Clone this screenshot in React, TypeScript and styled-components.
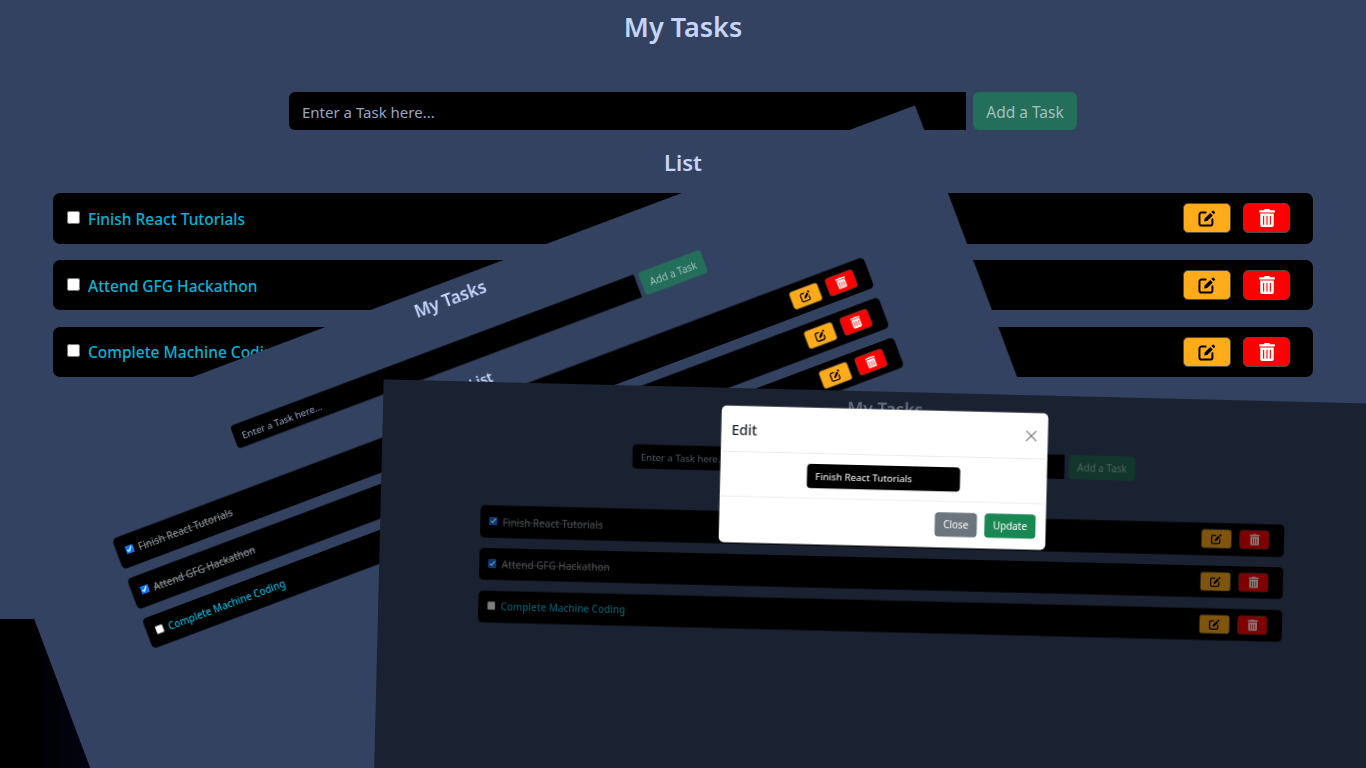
import React from "react";
import styled, { createGlobalStyle, css } from "styled-components";
import { FaTrashAlt } from "react-icons/fa";

const Global = createGlobalStyle`
  html, body { margin: 0; padding: 0; }
  body {
    width: 1366px;
    height: 768px;
    overflow: hidden;
    background: linear-gradient(90deg, #000 0%, #000 30px, #04051a 110px);
    font-family: "Noto Sans", "Open Sans", sans-serif;
  }
  #root { width: 1366px; height: 768px; position: relative; overflow: hidden; }
`;

type Placement = "base" | "tilted" | "dimmed";

const placements = {
  base: css`
    position: relative;
    width: 1366px;
    height: 619px;
  `,
  tilted: css`
    position: absolute;
    left: -67.7px;
    top: 434.75px;
    width: 1577.5px;
    height: 820px;
    padding: 1.25px 0 0 105px;
    transform-origin: 105px 1.25px;
    transform: rotate(-20.6deg) scale(0.637);
    filter: blur(0.25px);
  `,
  dimmed: css`
    position: absolute;
    left: 345.5px;
    top: 381.2px;
    width: 1582px;
    height: 820px;
    padding-left: 104px;
    transform-origin: 104px 0;
    transform: rotate(1.4deg) scale(0.638);
    filter: blur(0.25px);
  `,
};

const Sheet = styled.section<{ $placement: Placement }>`
  ${(p) => placements[p.$placement]}
  box-sizing: border-box;
  background: #344262;
  overflow: hidden;
`;

const Inner = styled.div`
  width: 1366px;
  display: flex;
  flex-direction: column;
  align-items: center;
`;

const Title = styled.h1`
  margin: 0;
  height: 92px;
  padding-top: 8px;
  box-sizing: border-box;
  font-size: 27px;
  line-height: 38px;
  font-weight: 600;
  color: #c5d5fb;
`;

const AddRow = styled.div`
  display: flex;
  gap: 7px;
  height: 38px;
`;

const TaskInput = styled.input`
  width: 677px;
  height: 38px;
  box-sizing: border-box;
  padding: 2px 13px 0;
  border: none;
  border-radius: 6px 0 0 6px;
  outline: none;
  background: #000;
  color: #fff;
  font: 15px "Noto Sans", sans-serif;
  &::placeholder { color: #97a6c6; opacity: 1; }
`;

const AddButton = styled.button`
  width: 104px;
  height: 38px;
  padding: 2px 0 0;
  border: none;
  border-radius: 6px;
  background: #236f59;
  color: #a3bfc0;
  font: 15.5px "Noto Sans", sans-serif;
`;

const ListTitle = styled.h2`
  margin: 0;
  height: 63px;
  padding-top: 14px;
  box-sizing: border-box;
  font-size: 22px;
  line-height: 36px;
  font-weight: 600;
  color: #c5d5fb;
`;

const Rows = styled.ul`
  list-style: none;
  margin: 0;
  padding: 0;
  width: 1260px;
  display: flex;
  flex-direction: column;
  gap: 16.3px;
`;

const Row = styled.li`
  height: 50.5px;
  padding: 0 23px 0 14px;
  box-sizing: border-box;
  display: flex;
  align-items: center;
  border-radius: 7px;
  background: #000;
`;

const Check = styled.input`
  width: 13px;
  height: 13px;
  margin: -2px 8px 0 0;
  flex: none;
`;

const TaskName = styled.span<{ $done: boolean }>`
  flex: 1;
  padding-top: 1px;
  font-size: 15.5px;
  font-weight: 500;
  color: ${(p) => (p.$done ? "#85898f" : "#00b4d8")};
  text-decoration: ${(p) => (p.$done ? "line-through" : "none")};
`;

const Actions = styled.div`
  display: flex;
  gap: 12px;
`;

const IconButton = styled.button<{ $tone: "edit" | "remove" }>`
  width: ${(p) => (p.$tone === "edit" ? 48 : 47)}px;
  height: 30px;
  padding: 0;
  display: flex;
  align-items: center;
  justify-content: center;
  box-sizing: border-box;
  border: 1px solid #4c4c4c;
  border-radius: 5px;
  font-size: 18px;
  background: ${(p) => (p.$tone === "edit" ? "#ffab1a" : "#ff0000")};
  color: ${(p) => (p.$tone === "edit" ? "#000" : "#fff")};
`;

const EditGlyph = styled.svg`
  width: 18px;
  height: 18px;
`;

const Backdrop = styled.div`
  position: absolute;
  inset: 0;
  background: rgba(0, 0, 0, 0.5);
`;

const Modal = styled.div`
  position: absolute;
  left: 531px;
  top: 28px;
  width: 512px;
  height: 214px;
  display: flex;
  flex-direction: column;
  border-radius: 8px;
  background: #fff;
  color: #212529;
`;

const ModalHeader = styled.header`
  height: 72px;
  flex: none;
  padding: 0 16px;
  box-sizing: border-box;
  display: flex;
  align-items: center;
  justify-content: space-between;
  border-bottom: 1px solid #dee2e6;
  font-size: 22px;
  font-weight: 500;
`;

const CloseGlyph = styled.svg`
  width: 20px;
  height: 20px;
  stroke: #6d6e70;
  stroke-width: 1.6;
  fill: none;
`;

const ModalBody = styled.div`
  height: 70px;
  flex: none;
  box-sizing: border-box;
  display: flex;
  align-items: center;
  justify-content: center;
  border-bottom: 1px solid #dee2e6;
`;

const EditInput = styled.input`
  width: 240px;
  height: 38px;
  box-sizing: border-box;
  padding: 0 13px;
  border: none;
  border-radius: 6px;
  background: #000;
  color: #fff;
  font: 15.3px "Noto Sans", sans-serif;
`;

const ModalFooter = styled.footer`
  flex: 1;
  padding: 0 16px;
  display: flex;
  align-items: center;
  justify-content: flex-end;
  gap: 12px;
`;

const FooterButton = styled.button<{ $primary?: boolean }>`
  width: ${(p) => (p.$primary ? 80 : 66)}px;
  height: 38px;
  padding: 0;
  border: none;
  border-radius: 6px;
  background: ${(p) => (p.$primary ? "#198754" : "#6c757d")};
  color: #fff;
  font: 15.5px "Noto Sans", sans-serif;
`;

const tasks = ["Finish React Tutorials", "Attend GFG Hackathon", "Complete Machine Coding"];

function EditIcon() {
  return (
    <EditGlyph viewBox="0 0 20 20" aria-hidden="true">
      <path
        d="M8.5 4 H4 a2.4 2.4 0 0 0 -2.4 2.4 V16 a2.4 2.4 0 0 0 2.4 2.4 H13.6 a2.4 2.4 0 0 0 2.4 -2.4 V11.5"
        fill="none"
        stroke="currentColor"
        strokeWidth="2.2"
        strokeLinecap="round"
      />
      <path
        d="M6.8 14 L7.4 10.6 L13.6 4.4 L16.4 7.2 L10.2 13.4 Z M14.8 3.2 L15.9 2.1 a1.3 1.3 0 0 1 1.8 0 L18.6 3 a1.3 1.3 0 0 1 0 1.8 L17.5 5.9 Z"
        fill="currentColor"
      />
    </EditGlyph>
  );
}

function TaskBoard({
  placement,
  done = 0,
  children,
}: {
  placement: Placement;
  done?: number;
  children?: React.ReactNode;
}) {
  return (
    <Sheet $placement={placement}>
      <Inner>
        <Title>My Tasks</Title>
        <AddRow>
          <TaskInput placeholder="Enter a Task here..." readOnly />
          <AddButton>Add a Task</AddButton>
        </AddRow>
        <ListTitle>List</ListTitle>
        <Rows>
          {tasks.map((task, i) => (
            <Row key={task}>
              <Check type="checkbox" checked={i < done} readOnly />
              <TaskName $done={i < done}>{task}</TaskName>
              <Actions>
                <IconButton $tone="edit" aria-label="Edit">
                  <EditIcon />
                </IconButton>
                <IconButton $tone="remove" aria-label="Delete">
                  <FaTrashAlt />
                </IconButton>
              </Actions>
            </Row>
          ))}
        </Rows>
      </Inner>
      {children}
    </Sheet>
  );
}

export default function App() {
  return (
    <>
      <Global />
      <TaskBoard placement="base" />
      <TaskBoard placement="tilted" done={2} />
      <TaskBoard placement="dimmed" done={2}>
        <Backdrop />
        <Modal>
          <ModalHeader>
            Edit
            <CloseGlyph viewBox="0 0 20 20" aria-label="Close">
              <path d="M2 2 L18 18 M18 2 L2 18" />
            </CloseGlyph>
          </ModalHeader>
          <ModalBody>
            <EditInput defaultValue="Finish React Tutorials" />
          </ModalBody>
          <ModalFooter>
            <FooterButton>Close</FooterButton>
            <FooterButton $primary>Update</FooterButton>
          </ModalFooter>
        </Modal>
      </TaskBoard>
    </>
  );
}
